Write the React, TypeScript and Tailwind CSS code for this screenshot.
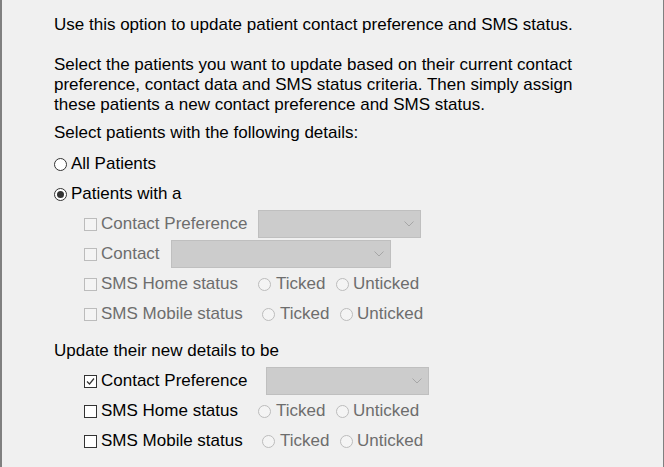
const font = { fontFamily: '"Liberation Sans", Arial, sans-serif' };

const Check = ({ checked = false, disabled = false }: { checked?: boolean; disabled?: boolean }) => (
  <span
    className={`inline-flex h-[13px] w-[13px] shrink-0 items-center justify-center border ${
      disabled ? "border-[#bcbcbc] bg-[#f4f4f4]" : "border-[#333333] bg-white"
    }`}
  >
    {checked && (
      <svg width="11" height="11" viewBox="0 0 11 11">
        <path d="M2 5.5 L4.5 8 L9 2.5" fill="none" stroke="#333333" strokeWidth="1.2" />
      </svg>
    )}
  </span>
);

const Radio = ({ selected = false, disabled = false }: { selected?: boolean; disabled?: boolean }) => (
  <span
    className={`inline-flex h-[13px] w-[13px] shrink-0 items-center justify-center rounded-full border ${
      disabled ? "border-[#bcbcbc] bg-[#f4f4f4]" : "border-[#333333] bg-white"
    }`}
  >
    {selected && <span className="h-[7px] w-[7px] rounded-full bg-[#333333]" />}
  </span>
);

const Combo = ({ width }: { width: string }) => (
  <div className={`flex h-[28px] ${width} items-center justify-end border border-[#bfbfbf] bg-[#cccccc] pr-[6px]`}>
    <svg width="10" height="6" viewBox="0 0 10 6">
      <path d="M0.5 0.5 L5 5 L9.5 0.5" fill="none" stroke="#a6a6a6" strokeWidth="1" />
    </svg>
  </div>
);

const TickPair = ({ disabled = true }: { disabled?: boolean }) => (
  <div className={`flex items-center ${disabled ? "text-[#6d6d6d]" : "text-black"}`}>
    <div className="flex w-[78px] items-center gap-[5px]">
      <Radio disabled={disabled} />
      <span>Ticked</span>
    </div>
    <div className="flex items-center gap-[4px]">
      <Radio disabled={disabled} />
      <span>Unticked</span>
    </div>
  </div>
);

const CheckLabel = ({
  label,
  width,
  checked,
  disabled,
}: {
  label: string;
  width: string;
  checked?: boolean;
  disabled?: boolean;
}) => (
  <div className={`flex ${width} shrink-0 items-center gap-[4px] ${disabled ? "text-[#6d6d6d]" : "text-black"}`}>
    <Check checked={checked} disabled={disabled} />
    <span>{label}</span>
  </div>
);

export default function App() {
  return (
    <div
      className="h-[467px] w-[664px] overflow-hidden border-l-2 border-r border-[#808080] bg-[#f0f0f0] text-[17px] text-black"
      style={font}
    >
      <div className="pl-[52px] pt-[15px]">
        <p className="leading-[20px]">Use this option to update patient contact preference and SMS status.</p>
        <p className="mt-[20px] w-[540px] leading-[20px]">
          Select the patients you want to update based on their current contact preference, contact data and SMS
          status criteria. Then simply assign these patients a new contact preference and SMS status.
        </p>
        <p className="mt-[8px] leading-[20px]">Select patients with the following details:</p>

        <div className="mt-[6px] flex flex-col">
          <div className="flex h-[30px] items-center gap-[4px]">
            <Radio />
            <span>All Patients</span>
          </div>
          <div className="flex h-[30px] items-center gap-[4px]">
            <Radio selected />
            <span>Patients with a</span>
          </div>
          <div className="flex h-[30px] items-center pl-[30px]">
            <CheckLabel label="Contact Preference" width="w-[174px]" disabled />
            <Combo width="w-[163px]" />
          </div>
          <div className="flex h-[30px] items-center pl-[30px]">
            <CheckLabel label="Contact" width="w-[87px]" disabled />
            <Combo width="w-[220px]" />
          </div>
          <div className="flex h-[30px] items-center pl-[30px]">
            <CheckLabel label="SMS Home status" width="w-[174px]" disabled />
            <TickPair />
          </div>
          <div className="flex h-[30px] items-center pl-[30px]">
            <CheckLabel label="SMS Mobile status" width="w-[178px]" disabled />
            <TickPair />
          </div>
        </div>

        <p className="mt-[12px] leading-[20px]">Update their new details to be</p>
        <div className="mt-[5px] flex flex-col">
          <div className="flex h-[30px] items-center pl-[30px]">
            <CheckLabel label="Contact Preference" width="w-[182px]" checked />
            <Combo width="w-[163px]" />
          </div>
          <div className="flex h-[30px] items-center pl-[30px]">
            <CheckLabel label="SMS Home status" width="w-[174px]" />
            <TickPair />
          </div>
          <div className="flex h-[30px] items-center pl-[30px]">
            <CheckLabel label="SMS Mobile status" width="w-[178px]" />
            <TickPair />
          </div>
        </div>
      </div>
    </div>
  );
}
